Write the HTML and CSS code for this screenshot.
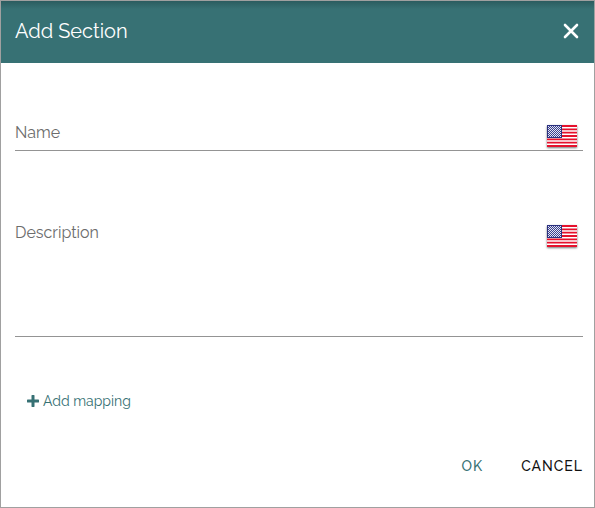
FILE: index.html
```html
<!DOCTYPE html>
<html lang="en">
<head>
<meta charset="utf-8">
<title>Add Section</title>
<link rel="stylesheet" href="styles.css">
</head>
<body>
<svg class="defs" aria-hidden="true">
  <defs>
    <pattern id="stars" width="2" height="2" patternUnits="userSpaceOnUse">
      <rect width="2" height="2" fill="#3a4090"/>
      <path d="M0 0h1v1H0zM1 1h1v1H1z" fill="#e4e6f2"/>
    </pattern>
    <symbol id="flag-us" viewBox="0 0 30 22">
      <rect width="30" height="22" fill="#fff"/>
      <path d="M0 1h30M0 4.4h30M0 7.7h30M0 11h30M0 14.4h30M0 17.7h30M0 21h30" stroke="#e5112c" stroke-width="1.8"/>
      <rect width="15" height="13" fill="#2b3180"/>
      <rect x="1" y="1" width="13" height="11" fill="url(#stars)"/>
    </symbol>
  </defs>
</svg>
<main class="dialog">
  <header class="dialog-header">
    <h1 class="dialog-title">Add Section</h1>
    <button class="icon-button" type="button" aria-label="Close">
      <svg class="close-icon" viewBox="0 0 18 18"><path d="M3 3l12 12M15 3L3 15"/></svg>
    </button>
  </header>
  <form class="dialog-form">
    <div class="field">
      <label class="field-label" for="name">Name</label>
      <input class="field-control" id="name" type="text">
      <button class="icon-button" type="button" aria-label="Name language: English"><svg class="flag"><use href="#flag-us"/></svg></button>
    </div>
    <div class="field field-tall">
      <label class="field-label" for="description">Description</label>
      <textarea class="field-control" id="description"></textarea>
      <button class="icon-button" type="button" aria-label="Description language: English"><svg class="flag"><use href="#flag-us"/></svg></button>
    </div>
    <button class="add-mapping" type="button">
      <svg class="plus-icon" viewBox="0 0 12 12"><path d="M6 1v10M1 6h10"/></svg>
      Add mapping
    </button>
    <div class="actions">
      <button class="action action-primary" type="submit">OK</button>
      <button class="action" type="button">CANCEL</button>
    </div>
  </form>
</main>
</body>
</html>
```

FILE: styles.css
```css
* {
  box-sizing: border-box;
}

body {
  margin: 0;
  font-family: Raleway, Lato, "Open Sans", sans-serif;
  font-size: 16px;
  color: #111;
  background: #fff;
}

.defs {
  position: absolute;
  width: 0;
  height: 0;
}

button {
  padding: 0;
  border: 0;
  background: none;
  font: inherit;
  color: inherit;
  cursor: pointer;
}

.dialog {
  min-height: 100vh;
  border: 1px solid #a0a0a0;
}

.dialog-header {
  display: flex;
  align-items: center;
  justify-content: space-between;
  height: 62px;
  padding: 0 14px 2px;
  color: #fff;
  background: linear-gradient(#2b5c5f, #377174 8px);
}

.dialog-title {
  margin: 0;
  font-size: 20px;
  line-height: 24px;
  font-weight: 400;
}

.icon-button {
  display: block;
}

.close-icon {
  display: block;
  width: 18px;
  height: 18px;
  fill: none;
  stroke: #fff;
  stroke-width: 2.6;
  stroke-linecap: round;
}

.dialog-form {
  padding: 56px 11px 28px 14px;
}

.field {
  display: grid;
  grid-template-columns: 1fr auto;
  align-items: start;
  height: 32px;
  margin-bottom: 68px;
  padding-right: 6px;
  border-bottom: 1px solid #949494;
}

.field-tall {
  height: 118px;
  margin-bottom: 52px;
}

.field-label,
.field-control {
  grid-area: 1 / 1;
  line-height: 28px;
}

.field-label {
  color: #6c6c6c;
  pointer-events: none;
}

.field-control {
  width: 100%;
  height: 30px;
  margin: 0;
  padding: 0;
  border: 0;
  outline: 0;
  resize: none;
  background: transparent;
  font: inherit;
}

.field-tall .field-control {
  height: 116px;
}

.flag {
  display: block;
  width: 30px;
  height: 22px;
  margin-top: 6px;
  box-shadow: 0 1px 2px #777;
}

.add-mapping {
  display: flex;
  align-items: center;
  gap: 4px;
  margin-left: 12px;
  font-size: 14px;
  line-height: 24px;
  color: #377174;
}

.plus-icon {
  width: 12px;
  height: 12px;
  fill: none;
  stroke: #377174;
  stroke-width: 3;
  stroke-linecap: round;
}

.actions {
  display: flex;
  justify-content: flex-end;
  gap: 38px;
  margin-top: 41px;
}

.action {
  font-size: 14px;
  font-weight: 500;
  line-height: 24px;
  letter-spacing: 1px;
}

.action-primary {
  color: #377174;
}
```
